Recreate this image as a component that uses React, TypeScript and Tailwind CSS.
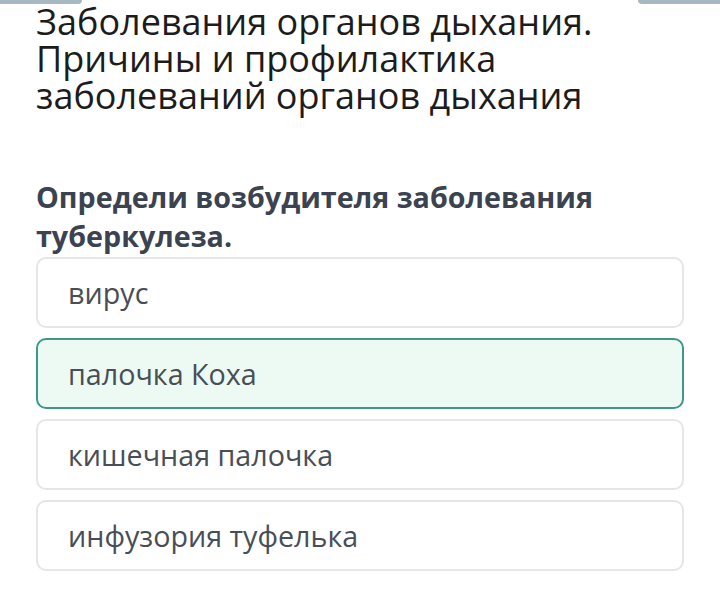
import React from "react";

const options = [
  { text: "вирус", selected: false },
  { text: "палочка Коха", selected: true },
  { text: "кишечная палочка", selected: false },
  { text: "инфузория туфелька", selected: false },
];

export default function App() {
  return (
    <div
      className="w-[720px] h-[607px] bg-white overflow-hidden"
      style={{ fontFamily: '"Open Sans", "Noto Sans", sans-serif' }}
    >
      <div className="flex justify-between h-[4px]">
        <div className="w-[82px] h-[4px] bg-[#a8b8c0] rounded-br-[10px]" />
        <div className="w-[82px] h-[4px] bg-[#a8b8c0] rounded-bl-[10px]" />
      </div>
      <div className="px-[36px]">
        <h1 className="-mt-[1px] text-[36px] leading-[37px] text-[#1c1c1c] font-normal">
          Заболевания органов дыхания.
          <br />
          Причины и профилактика
          <br />
          заболеваний органов дыхания
        </h1>
        <p className="mt-[63px] text-[28.7px] leading-[39px] font-bold text-[#3c4350]">
          Определи возбудителя заболевания
          <br />
          туберкулеза.
        </p>
        <div className="mt-[2px] flex flex-col gap-[10px]">
          {options.map((o) => (
            <div
              key={o.text}
              className={
                o.selected
                  ? "h-[71px] rounded-[10px] border-2 border-[#3e988a] bg-[#ecfaf3] flex items-center pl-[30px]"
                  : "h-[71px] rounded-[10px] border-2 border-[#e6e6e6] bg-white flex items-center pl-[30px]"
              }
            >
              <span className="text-[28.7px] text-[#494e55]">{o.text}</span>
            </div>
          ))}
        </div>
      </div>
    </div>
  );
}
